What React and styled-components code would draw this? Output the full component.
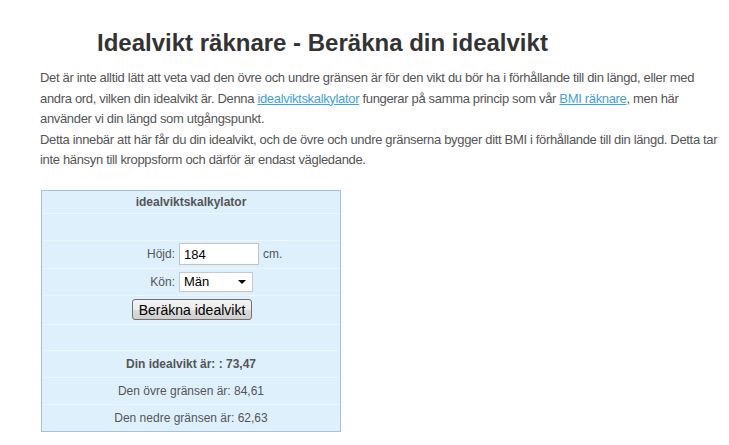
import React from "react";
import styled, { createGlobalStyle } from "styled-components";

const GlobalStyle = createGlobalStyle`
  body {
    margin: 0;
    background: #fff;
    font-family: "Liberation Sans", Arial, sans-serif;
  }
`;

const Page = styled.div`
  padding: 28px 0 0 40px;
  width: 689px;
`;

const Heading = styled.h1`
  margin: 0 0 10px 0;
  padding-left: 57px;
  font-size: 24px;
  font-weight: bold;
  color: #333;
  line-height: 30px;
`;

const Intro = styled.p`
  margin: 0;
  font-size: 13px;
  letter-spacing: -0.33px;
  line-height: 20.5px;
  color: #555;
  white-space: nowrap;
`;

const Link = styled.a`
  color: #3fa3d9;
  text-decoration: underline;
`;

const Calculator = styled.div`
  margin-top: 19px;
  margin-left: 1px;
  width: 298px;
  border: 1px solid #a9c0d6;
  background: #dff0fd;
  font-size: 12px;
  color: #555;
`;

const Row = styled.div`
  display: ${(p) => (p.$split ? "grid" : "flex")};
  grid-template-columns: 137px 1fr;
  align-items: center;
  justify-content: center;
  height: ${(p) => p.$h}px;
  border-top: ${(p) => (p.$first ? "none" : "1px solid #ecf6fe")};
  font-weight: ${(p) => (p.$bold ? "bold" : "normal")};
  box-sizing: border-box;
`;

const Label = styled.span`
  text-align: right;
  padding-right: 4px;
`;

const Field = styled.div`
  display: flex;
  align-items: center;
  gap: 4px;
`;

const TextInput = styled.input`
  width: 80px;
  height: 22px;
  box-sizing: border-box;
  border: 1px solid #c3c3c3;
  padding: 0 4px;
  font-family: "Liberation Sans", Arial, sans-serif;
  font-size: 13px;
  color: #000;
  background: #fff;
  outline: none;
`;

const SelectBox = styled.div`
  width: 74px;
  height: 20px;
  box-sizing: border-box;
  border: 1px solid #c8c8c8;
  background: #fff;
  display: flex;
  align-items: center;
  justify-content: space-between;
  padding: 0 6px 0 4px;
  font-size: 13px;
  color: #000;
`;

const Arrow = styled.span`
  width: 0;
  height: 0;
  border-left: 4px solid transparent;
  border-right: 4px solid transparent;
  border-top: 4px solid #000;
`;

const Button = styled.button`
  width: 120px;
  height: 21px;
  margin-left: 2px;
  padding: 0;
  border: 1px solid #707070;
  border-radius: 3px;
  background: linear-gradient(#f2f2f2 0%, #ebebeb 50%, #dddddd 51%, #cfcfcf 100%);
  font-family: "Liberation Sans", Arial, sans-serif;
  font-size: 14px;
  color: #000;
`;

export default function App() {
  return (
    <>
      <GlobalStyle />
      <Page>
        <Heading>Idealvikt räknare - Beräkna din idealvikt</Heading>
        <Intro>
          Det är inte alltid lätt att veta vad den övre och undre gränsen är för den vikt du bör ha i förhållande till din längd, eller med
          <br />
          andra ord, vilken din idealvikt är. Denna <Link href="#">idealviktskalkylator</Link> fungerar på samma princip som vår{" "}
          <Link href="#">BMI räknare</Link>, men här
          <br />
          använder vi din längd som utgångspunkt.
          <br />
          Detta innebär att här får du din idealvikt, och de övre och undre gränserna bygger ditt BMI i förhållande till din längd. Detta tar
          <br />
          inte hänsyn till kroppsform och därför är endast vägledande.
        </Intro>
        <Calculator>
          <Row $h={22} $first $bold>idealviktskalkylator</Row>
          <Row $h={27} />
          <Row $h={28} $split>
            <Label>Höjd:</Label>
            <Field>
              <TextInput defaultValue="184" />
              <span>cm.</span>
            </Field>
          </Row>
          <Row $h={27} $split>
            <Label>Kön:</Label>
            <Field>
              <SelectBox>
                Män
                <Arrow />
              </SelectBox>
            </Field>
          </Row>
          <Row $h={29}>
            <Button>Beräkna idealvikt</Button>
          </Row>
          <Row $h={26} />
          <Row $h={27} $bold>Din idealvikt är: : 73,47</Row>
          <Row $h={27}>Den övre gränsen är: 84,61</Row>
          <Row $h={27}>Den nedre gränsen är: 62,63</Row>
        </Calculator>
      </Page>
    </>
  );
}
